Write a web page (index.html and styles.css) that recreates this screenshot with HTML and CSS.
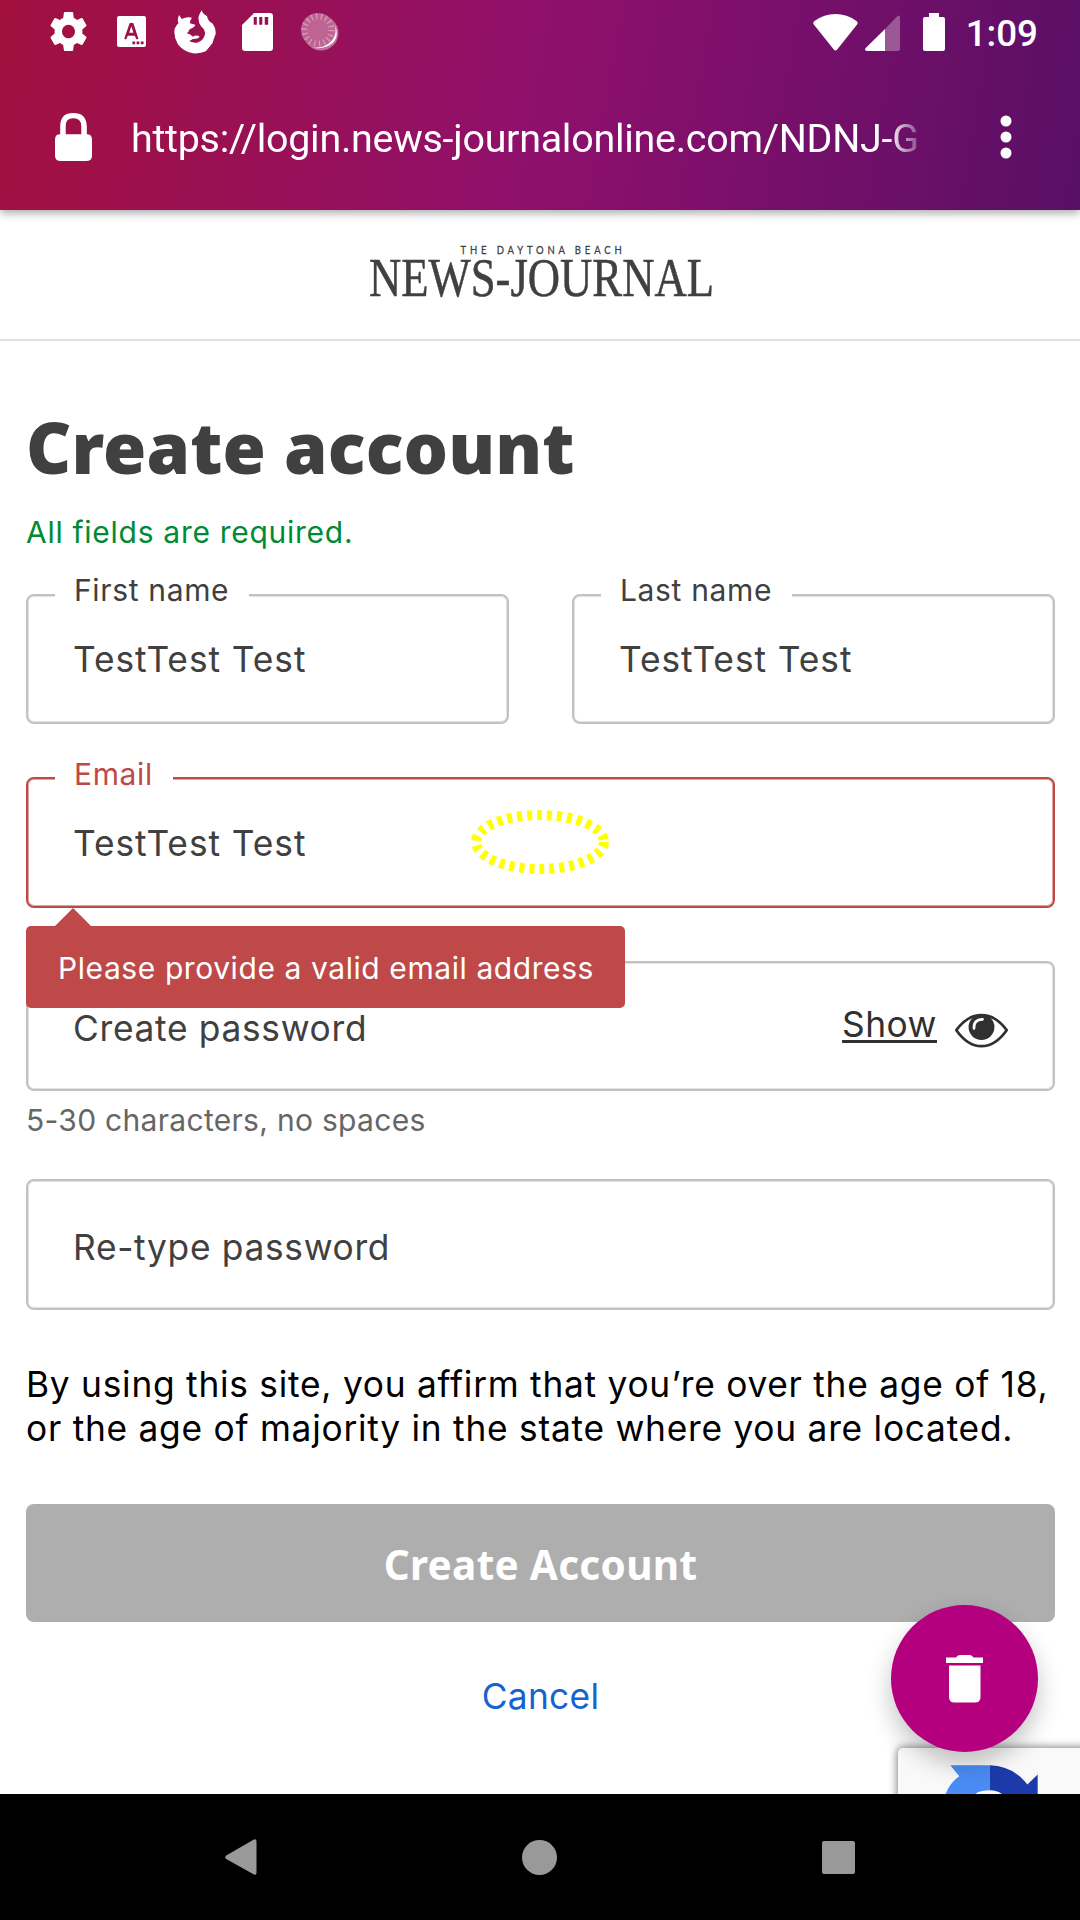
FILE: index.html
```
<!DOCTYPE html>
<html lang="en">
<head>
<meta charset="utf-8">
<title>Create account</title>
<link rel="stylesheet" href="styles.css">
</head>
<body>
<div class="screen">
  <header class="browser">
    <div class="status">
      <div class="status-left">
        <svg class="gear" viewBox="2 2 20 20" preserveAspectRatio="none"><path d="M19.43 12.98c.04-.32.07-.64.07-.98s-.03-.66-.07-.98l2.11-1.65c.19-.15.24-.42.12-.64l-2-3.46c-.12-.22-.39-.3-.61-.22l-2.49 1c-.52-.4-1.08-.73-1.69-.98l-.38-2.65C14.46 2.18 14.25 2 14 2h-4c-.25 0-.46.18-.49.42l-.38 2.65c-.61.25-1.17.59-1.69.98l-2.49-1c-.23-.09-.49 0-.61.22l-2 3.46c-.13.22-.07.49.12.64l2.11 1.65c-.04.32-.07.65-.07.98s.03.66.07.98l-2.11 1.65c-.19.15-.24.42-.12.64l2 3.46c.12.22.39.3.61.22l2.49-1c.52.4 1.08.73 1.69.98l.38 2.65c.03.24.24.42.49.42h4c.25 0 .46-.18.49-.42l.38-2.65c.61-.25 1.17-.59 1.69-.98l2.49 1c.23.09.49 0 .61-.22l2-3.46c.12-.22.07-.49-.12-.64l-2.11-1.65zM12 15.5c-1.93 0-3.5-1.57-3.5-3.5s1.57-3.5 3.5-3.5 3.5 1.57 3.5 3.5-1.57 3.5-3.5 3.5z"/></svg>
        <svg class="keyboard" viewBox="340 47 83 94" preserveAspectRatio="none"><path fill-rule="evenodd" d="M346 47h71q6 0 6 6v82q0 6-6 6h-71q-6 0-6-6V53q0-6 6-6zM376 69l-15 46q1 4 6 2l4-10h20l4 10q5 2 6-2l-14-46q-5-3-11 0zM381 78l6 20h-12zM384 124v9h8v-9zM396 124v9h8v-9zM408 124v9h8v-9z"/></svg>
        <svg class="firefox" viewBox="504 26 124 132" preserveAspectRatio="none"><path d="M519 41L527 53Q540 46 557 49Q550 60 551 66L567 70Q565 78 553 82Q546 86 547 92L541 95Q553 98 560 106Q570 99 580 106Q574 114 560 113Q550 120 546 117Q556 126 572 124Q594 118 596 95Q594 82 584 75Q574 60 577 45Q580 35 586 27Q588 38 601 44Q606 62 617 66Q628 80 627 98Q620 115 618 125Q606 140 598 150Q580 158 560 156Q530 150 515 128Q502 105 506 82Q512 70 517 66Q513 54 519 41Z"/></svg>
        <svg class="sdcard" viewBox="703 37 90 114" preserveAspectRatio="none"><path fill-rule="evenodd" d="M738 37h46q9 0 9 9v96q0 9-9 9h-72q-9 0-9-9V73zM737 49v23h9V49zM753 49v23h9V49zM769 49v23h10V49z"/></svg>
        <svg class="sync" viewBox="0 0 38 39"><circle cx="20" cy="21" r="17.5" opacity=".4"/><circle class="sync-face" cx="17" cy="18" r="17"/><circle class="sync-ticks" cx="17" cy="18" r="13.6"/><path d="M33.500 12Q39 24 31.500 31T10 35.500Q23 37 30 29.500T33.500 12z"/></svg>
      </div>
      <div class="status-right">
        <svg class="wifi" viewBox="0 0 45 38"><path d="M22.500 37.500Q21.500 37.500 20.800 36.600L.6 11.200Q-.4 9.500 1.500 8Q11 1 22.500 1T43.500 8Q45.300 9.500 44.300 11.200L24.200 36.600Q23.500 37.500 22.500 37.500z"/></svg>
        <svg class="signal" viewBox="0 0 36 36"><path opacity=".3" d="M20 14L32.500 1Q35 -.5 35 2.500V33.500Q35 36 32.500 36H20z"/><path d="M20 14V36H2Q-1 35.500 .7 33z"/></svg>
        <svg class="battery" viewBox="0 0 22 38"><path d="M6 0h10v4h4q2 0 2 2v30q0 2-2 2H2q-2 0-2-2V6q0-2 2-2h4z"/></svg>
        <span class="clock">1:09</span>
      </div>
    </div>
    <div class="urlbar">
      <svg class="lock" viewBox="160 338 107 144" preserveAspectRatio="none"><path fill-rule="evenodd" d="M175 402V378Q175 338 213 338T252 378V402Q267 402 267 418V466Q267 482 250 482H177Q160 482 160 466V418Q160 402 175 402zM191 402H236V378Q236 354 213 354T191 378z"/></svg>
      <span class="url">https://login.news-journalonline.com/NDNJ-G</span>
      <svg class="dots" viewBox="0 0 12 44"><circle cx="6" cy="6" r="5.500"/><circle cx="6" cy="22" r="5.500"/><circle cx="6" cy="38" r="5.500"/></svg>
    </div>
  </header>

  <div class="masthead">
    <svg class="logo" viewBox="0 0 346 60"><text class="logo-small" x="91.500" y="15" textLength="165" lengthAdjust="spacingAndGlyphs">THE DAYTONA BEACH</text><text class="logo-big" x="0" y="57" textLength="345" lengthAdjust="spacingAndGlyphs">NEWS-JOURNAL</text></svg>
  </div>

  <main class="page">
    <h1 class="title">Create account</h1>
    <p class="required">All fields are required.</p>
    <div class="names">
      <div class="field"><span class="label">First name</span><span class="value">TestTest Test</span></div>
      <div class="field"><span class="label">Last name</span><span class="value">TestTest Test</span></div>
    </div>
    <div class="field field-error">
      <span class="label">Email</span><span class="value">TestTest Test</span>
      <svg class="focus-ring" viewBox="0 0 138 64"><ellipse cx="69" cy="32" rx="64" ry="27"/></svg>
      <div class="tooltip">Please provide a valid email address</div>
    </div>
    <div class="field">
      <span class="placeholder">Create password</span>
      <a class="show">Show</a>
      <svg class="eye" viewBox="527 222 156 102"><path class="eye-line" d="M531 272Q563 228 605 228T679 272Q646 319 605 319T531 272z"/><circle cx="605" cy="263" r="38"/><path class="eye-glint" d="M583 267Q581 241 608 240"/></svg>
    </div>
    <p class="hint">5-30 characters, no spaces</p>
    <div class="field"><span class="placeholder">Re-type password</span></div>
    <p class="terms">By using this site, you affirm that you’re over the age of 18,<br>or the age of majority in the state where you are located.</p>
    <div class="submit">Create Account</div>
    <a class="cancel">Cancel</a>
    <div class="captcha">
      <svg class="captcha-logo" viewBox="255 555 280 88" preserveAspectRatio="none"><path fill="#4a8cf5" d="M271 556H390V629Q356 629 343 643H256Q268 608 298 588z"/><path fill="#1c3aa9" d="M390 556Q460 558 503 612L534 583V643H430Q414 629 390 629z"/></svg>
    </div>
    <div class="fab"><svg class="trash" viewBox="0 0 37 48"><path d="M10 2.500Q11 0 14 0H24Q26 0 27.500 2.500H37V8H0V2.500zM3 10.500H34.500V42Q34.500 47.500 29 47.500H8.500Q3 47.500 3 42z"/></svg></div>
  </main>

  <nav class="navbar">
    <svg class="back" viewBox="0 0 32 36"><path d="M28.500 .8Q31.500 -1 31.500 2.500V33.500Q31.500 37 28.500 35.200L1.200 20Q-.8 18.200 1.200 16.400z"/></svg>
    <span class="home"></span>
    <span class="recent"></span>
  </nav>
</div>
</body>
</html>
```
FILE: styles.css
```
* { box-sizing: border-box; }

body {
  margin: 0;
  background: #fff;
  color: #404040;
  font-family: Inter, "Noto Sans", sans-serif;
}

p, h1 { margin: 0; }

svg { display: block; flex: none; }

.screen {
  width: 1080px;
  height: 1920px;
  display: flex;
  flex-direction: column;
  overflow: hidden;
}

/* Browser chrome */
.browser {
  position: relative;
  z-index: 2;
  height: 210px;
  flex: none;
  background: linear-gradient(100deg, #a3103f 0%, #8f106c 50%, #590f66 100%);
  box-shadow: 0 3px 9px rgba(0, 0, 0, .35);
  fill: #fff;
  color: #fff;
  font-family: Roboto, sans-serif;
}

.status {
  height: 63px;
  display: flex;
  justify-content: space-between;
  padding: 0 42px 0 50px;
}

.status-left, .status-right { display: flex; align-items: center; }

.gear { width: 37px; height: 39px; margin-right: 30px; }
.keyboard { width: 29px; height: 31px; margin-right: 28px; }
.firefox { width: 42px; height: 44px; margin-right: 26px; }
.sdcard { width: 31px; height: 38px; margin-right: 28px; }
.sync { width: 38px; height: 39px; }
.sync-face { fill: #bd6493; }
.sync-ticks { fill: none; stroke: #d59cbb; stroke-width: 6; stroke-dasharray: 1.3 3.45; }

.wifi { width: 45px; height: 38px; margin-right: 7px; }
.signal { width: 36px; height: 36px; margin: 2px 22px 0 0; }
.battery { width: 22px; height: 38px; margin-right: 21px; }
.clock { font-size: 36.75px; font-weight: 500; line-height: 43px; padding-top: 3px; }

.urlbar {
  display: flex;
  align-items: center;
  height: 148px;
  padding: 0 68px 0 55px;
}

.lock { width: 37px; height: 48px; margin-right: 39px; }

.url {
  width: 789px;
  font-size: 39.4px;
  line-height: 46px;
  letter-spacing: -.25px;
  white-space: nowrap;
  padding-top: 4px;
  -webkit-mask-image: linear-gradient(90deg, #000 96%, transparent 101%);
  mask-image: linear-gradient(90deg, #000 96%, transparent 101%);
}

.dots { width: 12px; height: 44px; margin-left: auto; }

/* Newspaper masthead */
.masthead {
  height: 130.5px;
  flex: none;
  padding-top: 29px;
  border-bottom: 2.5px solid #e0e0e0;
}

.logo { width: 346px; height: 60px; margin: 0 auto; overflow: visible; fill: #404040; transform: translateX(2px); }
.logo-small { font: 12.3px Lato, sans-serif; letter-spacing: 5px; stroke: #404040; stroke-width: .3; }
.logo-big { font: 55px "Liberation Serif", serif; stroke: #404040; stroke-width: .5; }

/* Form */
.page {
  position: relative;
  height: 1453.5px;
  flex: none;
  padding: 66px 25px 0 26px;
  overflow: hidden;
}

.title {
  font: 900 70px/80px "Noto Sans", sans-serif;
  letter-spacing: .1px;
}

.required {
  margin-top: 25px;
  font-size: 30px;
  line-height: 40px;
  letter-spacing: .72px;
  color: #008a34;
}

.names {
  display: grid;
  grid-template-columns: 1fr 1fr;
  gap: 63px;
  margin-top: 42px;
}

.field {
  position: relative;
  display: flex;
  align-items: center;
  height: 130.5px;
  padding: 0 45px;
  border: 2px solid #c2c2c2;
  border-radius: 8px;
  box-shadow: inset 0 0 0 1px #e2e2e2;
  font-size: 35.3px;
  line-height: 44px;
}

.label {
  position: absolute;
  left: 27px;
  top: -21px;
  padding: 0 20px 0 19px;
  background: #fff;
  font-size: 30px;
  line-height: 30px;
  letter-spacing: .65px;
}

.value { padding-top: 3px; letter-spacing: .95px; }

.field-error { margin: 53px 0 53px; border-color: #bf4949; box-shadow: inset 0 0 0 1px #dfa4a4; }
.field-error .label { color: #bf4949; top: -20px; }
.field-error .value { padding-top: 4px; }

.focus-ring { position: absolute; left: 443px; top: 31px; width: 138px; height: 64px; }
.focus-ring ellipse { fill: none; stroke: #ff0; stroke-width: 10; stroke-dasharray: 5 5; }

.tooltip {
  position: absolute;
  z-index: 1;
  left: -2px;
  top: 147px;
  width: 599px;
  height: 82px;
  padding: 0 32px;
  border-radius: 5px;
  background: #bf4949;
  color: #fff;
  font-size: 30px;
  line-height: 84px;
  letter-spacing: .58px;
  white-space: nowrap;
}

.tooltip::before {
  content: "";
  position: absolute;
  left: 29px;
  bottom: 100%;
  border: 18px solid transparent;
  border-top: 0;
  border-bottom-color: #bf4949;
}

.placeholder { flex: 1; padding-top: 7px; letter-spacing: .7px; }

.show {
  margin-right: 18px;
  padding-bottom: 2px;
  color: #303030;
  letter-spacing: .5px;
  text-decoration: underline;
  text-decoration-thickness: 2.5px;
  text-underline-offset: 2.5px;
}

.eye { width: 53px; height: 35px; margin-top: 10px; fill: #303030; }
.eye-line { fill: none; stroke: #303030; stroke-width: 8; }
.eye-glint { fill: none; stroke: #fff; stroke-width: 8; stroke-linecap: round; }

.hint {
  margin: 9px 0 39px;
  font-size: 30px;
  line-height: 40px;
  letter-spacing: .3px;
  color: #666;
}

.terms {
  margin-top: 53px;
  font-size: 35.3px;
  line-height: 44px;
  letter-spacing: .75px;
  color: #000;
  white-space: nowrap;
}

.submit {
  height: 118px;
  margin-top: 53px;
  border-radius: 8px;
  background: #aeaeae;
  color: #fff;
  font: 700 40.5px/121px "Noto Sans", sans-serif;
  letter-spacing: .3px;
  text-align: center;
}

.cancel {
  display: block;
  margin-top: 49px;
  font-size: 35.3px;
  line-height: 52px;
  letter-spacing: .3px;
  text-align: center;
  color: #1563d2;
}

.captcha {
  position: absolute;
  left: 898px;
  top: 1407.5px;
  width: 260px;
  height: 80px;
  padding: 17px 0 0 47px;
  border-radius: 5px;
  background: #f9f9f9;
  box-shadow: 0 0 8px 1px gray;
}

.captcha-logo { width: 93px; height: 30px; }

.fab {
  position: absolute;
  left: 891px;
  top: 1264.5px;
  width: 147px;
  height: 147px;
  display: flex;
  align-items: center;
  justify-content: center;
  border-radius: 50%;
  background: #b4007f;
  box-shadow: 0 12px 24px rgba(0, 0, 0, .24);
}

.trash { width: 37px; height: 48px; fill: #fff; }

/* System navigation */
.navbar {
  position: relative;
  z-index: 2;
  flex: 1;
  display: flex;
  align-items: center;
  justify-content: space-between;
  padding: 0 225px;
  background: #000;
}

.back { width: 32px; height: 36px; fill: #999; }
.home { width: 35px; height: 35px; border-radius: 50%; background: #999; }
.recent { width: 33px; height: 33px; border-radius: 2px; background: #999; }
```
